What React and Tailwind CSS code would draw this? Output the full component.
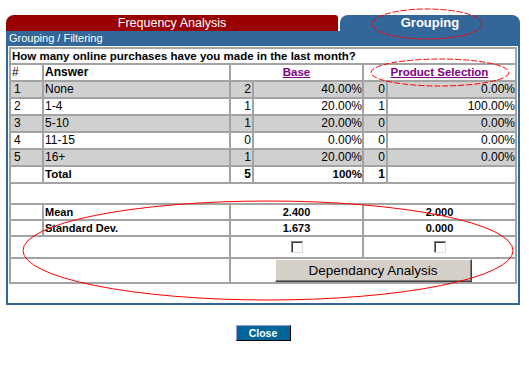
const rows = [
    { n: 1, answer: "None", base: 2, basePct: "40.00%", ps: 0, psPct: "0.00%" },
    { n: 2, answer: "1-4", base: 1, basePct: "20.00%", ps: 1, psPct: "100.00%" },
    { n: 3, answer: "5-10", base: 1, basePct: "20.00%", ps: 0, psPct: "0.00%" },
    { n: 4, answer: "11-15", base: 0, basePct: "0.00%", ps: 0, psPct: "0.00%" },
    { n: 5, answer: "16+", base: 1, basePct: "20.00%", ps: 0, psPct: "0.00%" },
];

const td = "border border-[#a3a3a3] p-0";

const Checkbox = () => (
    <span className="mx-auto block h-[12px] w-[12px] border border-t-[#808080] border-l-[#808080] border-r-[#dcdcdc] border-b-[#dcdcdc] bg-white shadow-[inset_1px_1px_0_#404040]" />
);

const App = () => {
    return (
        <div className="relative h-[371px] w-[529px] bg-white font-['Liberation_Sans',Arial,sans-serif]">
            <div className="ml-[6px] w-[514px] pt-[15px]">
                {/* tabs */}
                <div className="flex h-[16px] gap-[2px]">
                    <div className="w-[332px] rounded-tl-[8px] rounded-tr-[3px] bg-[#990000] text-center text-[12.5px] leading-[16px] text-white">
                        Frequency Analysis
                    </div>
                    <div className="w-[180px] rounded-t-[8px] bg-[#336699] text-center text-[13px] font-bold leading-[16px] text-white">
                        Grouping
                    </div>
                </div>

                {/* frame */}
                <div className="h-[274px] border-x-2 border-b-2 border-[#336699]">
                    <div className="h-[15px] bg-[#336699] pl-px text-[11px] leading-[15px] text-white">Grouping / Filtering</div>

                    <table className="ml-px mt-px w-[508px] table-fixed border-separate border-spacing-0 border border-[#a3a3a3] text-[12px] text-black">
                        <colgroup>
                            <col className="w-[33px]" />
                            <col className="w-[187px]" />
                            <col className="w-[23px]" />
                            <col className="w-[110px]" />
                            <col className="w-[24px]" />
                            <col className="w-[129px]" />
                        </colgroup>
                        <tbody>
                            <tr>
                                <td colSpan={6} className={td}>
                                    <div className="h-[14px] whitespace-nowrap pl-px text-[11.5px] font-bold leading-[14px]">
                                        How many online purchases have you made in the last month?
                                    </div>
                                </td>
                            </tr>
                            <tr>
                                <td className={td}>
                                    <div className="h-[15px] pl-px leading-[15px]">#</div>
                                </td>
                                <td className={td}>
                                    <div className="h-[15px] pl-px font-bold leading-[15px]">Answer</div>
                                </td>
                                <td colSpan={2} className={td}>
                                    <div className="h-[15px] text-center text-[11.5px] font-bold leading-[15px]">
                                        <a className="text-[#800080] underline">Base</a>
                                    </div>
                                </td>
                                <td colSpan={2} className={td}>
                                    <div className="h-[15px] text-center text-[11.5px] font-bold leading-[15px]">
                                        <a className="text-[#800080] underline">Product Selection</a>
                                    </div>
                                </td>
                            </tr>
                            {rows.map((r) => (
                                <tr key={r.n} className={r.n % 2 ? "bg-[#d0d0d0]" : "bg-white"}>
                                    <td className={td}>
                                        <div className="h-[15px] pl-[3px] leading-[15px]">{r.n}</div>
                                    </td>
                                    <td className={td}>
                                        <div className="h-[15px] pl-px leading-[15px]">{r.answer}</div>
                                    </td>
                                    <td className={td}>
                                        <div className="h-[15px] pr-px text-right leading-[15px]">{r.base}</div>
                                    </td>
                                    <td className={td}>
                                        <div className="h-[15px] text-right leading-[15px]">{r.basePct}</div>
                                    </td>
                                    <td className={td}>
                                        <div className="h-[15px] pr-px text-right leading-[15px]">{r.ps}</div>
                                    </td>
                                    <td className={td}>
                                        <div className="h-[15px] text-right leading-[15px]">{r.psPct}</div>
                                    </td>
                                </tr>
                            ))}
                            <tr>
                                <td className={td}>
                                    <div className="h-[15px]" />
                                </td>
                                <td className={td}>
                                    <div className="h-[15px] pl-px text-[11.5px] font-bold leading-[15px]">Total</div>
                                </td>
                                <td className={td}>
                                    <div className="h-[15px] pr-px text-right font-bold leading-[15px]">5</div>
                                </td>
                                <td className={td}>
                                    <div className="h-[15px] text-right text-[11.5px] font-bold leading-[15px]">100%</div>
                                </td>
                                <td className={td}>
                                    <div className="h-[15px] pr-px text-right font-bold leading-[15px]">1</div>
                                </td>
                                <td className={td}>
                                    <div className="h-[15px]" />
                                </td>
                            </tr>
                            <tr>
                                <td colSpan={6} className={td}>
                                    <div className="h-[19px]" />
                                </td>
                            </tr>
                            <tr>
                                <td className={td}>
                                    <div className="h-[14px]" />
                                </td>
                                <td className={td}>
                                    <div className="h-[14px] pl-px text-[11px] font-bold leading-[14px]">Mean</div>
                                </td>
                                <td colSpan={2} className={td}>
                                    <div className="h-[14px] text-center text-[11px] font-bold leading-[14px]">2.400</div>
                                </td>
                                <td colSpan={2} className={td}>
                                    <div className="h-[14px] text-center text-[11px] font-bold leading-[14px]">2.000</div>
                                </td>
                            </tr>
                            <tr>
                                <td className={td}>
                                    <div className="h-[14px]" />
                                </td>
                                <td className={td}>
                                    <div className="h-[14px] pl-px text-[11px] font-bold leading-[14px]">Standard Dev.</div>
                                </td>
                                <td colSpan={2} className={td}>
                                    <div className="h-[14px] text-center text-[11px] font-bold leading-[14px]">1.673</div>
                                </td>
                                <td colSpan={2} className={td}>
                                    <div className="h-[14px] text-center text-[11px] font-bold leading-[14px]">0.000</div>
                                </td>
                            </tr>
                            <tr>
                                <td colSpan={2} className={td}>
                                    <div className="h-[20px]" />
                                </td>
                                <td colSpan={2} className={td}>
                                    <div className="flex h-[20px] items-center">
                                        <Checkbox />
                                    </div>
                                </td>
                                <td colSpan={2} className={td}>
                                    <div className="flex h-[20px] items-center">
                                        <Checkbox />
                                    </div>
                                </td>
                            </tr>
                            <tr>
                                <td colSpan={2} className={td}>
                                    <div className="h-[23px]" />
                                </td>
                                <td colSpan={4} className={td}>
                                    <div className="flex h-[23px] justify-center">
                                        <button className="h-[23px] w-[197px] border border-t-white border-l-white border-r-[#404040] border-b-[#404040] bg-[#d4d0c8] text-[13.5px] leading-[20px] text-black shadow-[inset_-1px_-1px_0_#808080]">
                                            Dependancy Analysis
                                        </button>
                                    </div>
                                </td>
                            </tr>
                        </tbody>
                    </table>
                </div>

                <div className="mt-[20px] flex justify-center">
                    <button className="h-[16px] w-[55px] border border-t-[#9999cc] border-l-[#9999cc] border-r-black border-b-black bg-[#006699] text-[10.5px] font-bold leading-[14px] text-white">
                        Close
                    </button>
                </div>
            </div>

            {/* red annotation marks */}
            <svg className="pointer-events-none absolute left-0 top-0" width="529" height="371" fill="none" stroke="#ff0000" strokeWidth="1">
                <ellipse cx="427" cy="24" rx="55" ry="15" strokeDasharray="6 2" />
                <ellipse cx="440" cy="72.5" rx="69" ry="13.5" strokeDasharray="6 2" />
                <ellipse cx="268" cy="250.5" rx="245" ry="49.5" />
            </svg>
        </div>
    );
};

export default App;
